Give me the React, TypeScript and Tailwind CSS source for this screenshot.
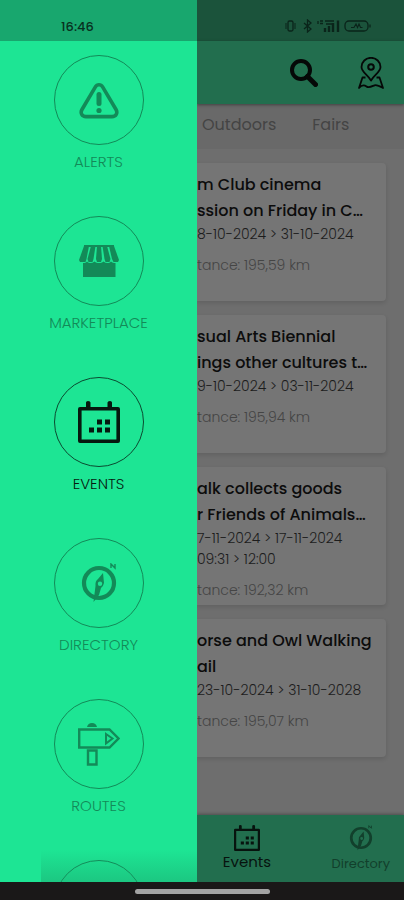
import * as React from "react";
import { clsx } from "clsx";

type IconProps = Readonly<{ className?: string }>;

function AlertIcon({ className }: IconProps) {
  return (
    <svg viewBox="0 0 40 40" fill="none" stroke="currentColor" strokeLinecap="round" strokeLinejoin="round" className={className}>
      <path d="M16.4 6.8 C18 4.1 22 4.1 23.6 6.8 L37 29.5 C39 33 37 36.6 33 36.6 H7 C3 36.6 1 33 3 29.5 Z" strokeWidth="3.6" />
      <path d="M20 14.5 V23.5" strokeWidth="5" />
      <circle cx="20" cy="30.500" r="2.6" fill="currentColor" stroke="none" />
    </svg>
  );
}

function MarketIcon({ className }: IconProps) {
  return (
    <svg viewBox="0 0 40 32" fill="currentColor" className={className}>
      <path d="M5 0 H35 V2 H5 Z" />
      <path d="M5 1 H10 L7.5 14 L6.5 17 H1 L0 15 Z" />
      <path d="M12 1 H16.5 L14.5 14 L13.5 17 H9.5 L8.5 14 Z" />
      <path d="M18 1 H22 L23 14 L22 17 H18 L17 14 Z" />
      <path d="M23.5 1 H28 L31.5 14 L30.5 17 H26.5 L25.5 14 Z" />
      <path d="M30 1 H35 L40 15 L39 17 H34.5 L33 14 Z" />
      <path d="M4 18 C6 18 7 17.5 8 16.5 C10 18.5 13 18.5 15.5 16.5 C18 18.5 22 18.5 24.5 16.5 C27 18.5 30 18.5 32 16.5 C33 17.5 35 18 36.5 18 V32 H4 Z" />
    </svg>
  );
}

function CalendarIcon({ className }: IconProps) {
  return (
    <svg viewBox="0 0 42 42" fill="currentColor" className={className}>
      <path fillRule="evenodd" d="M2 6 H8 V1.5 Q8 0 10 0 Q12.5 0 12.5 1.5 V6 H29.5 V1.5 Q29.5 0 32 0 Q34 0 34 1.5 V6 H40 Q42 6 42 8 V40 Q42 42 40 42 H2 Q0 42 0 40 V8 Q0 6 2 6 Z M3.6 9.6 V38.4 H38.4 V9.6 Z" />
      <path d="M19 18.500 h5 v5 h-5z M27 18.500 h5 v5 h-5z M11 26.500 h5 v5 h-5z M19 26.500 h5 v5 h-5z M27 26.500 h5 v5 h-5z" />
    </svg>
  );
}

function CompassIcon({ className }: IconProps) {
  return (
    <svg viewBox="0 0 36 40" fill="none" stroke="currentColor" className={className}>
      <circle cx="18" cy="20" r="15" strokeWidth="4.2" />
      <path fill="currentColor" stroke="none" fillRule="evenodd" d="M22 10 L23 20 Q22 24 20 25 L18 32 L12.5 39 L13.5 31 L14.5 23 Q14 18 17 16 Z M19 18.5 A2.2 2.2 0 1 0 19 22.9 A2.2 2.2 0 1 0 19 18.5 Z" />
      <path d="M30 5 V1 L34 5 V1" strokeWidth="1.4" />
    </svg>
  );
}

function SignpostIcon({ className }: IconProps) {
  return (
    <svg viewBox="0 0 42 44" fill="none" stroke="currentColor" strokeWidth="2.4" className={className}>
      <path d="M1.2 7.5 H31.5 L40.500 16.5 L31.5 25.5 H1.2 Z" />
      <path d="M28 12 L34.5 16.5 L28 21.5 Z" strokeWidth="2" />
      <path d="M9 5 Q10 1 14 1 Q18 1 19 5 Z" fill="currentColor" stroke="none" />
      <path d="M10 28.5 H18.5 V42.5 H10 Z" />
    </svg>
  );
}

function SearchIcon({ className }: IconProps) {
  return (
    <svg viewBox="0 0 28 28" fill="none" stroke="currentColor" className={className}>
      <circle cx="11" cy="11" r="9" strokeWidth="4" />
      <path d="M17.5 17.5 L25.500 25.500" strokeWidth="5" strokeLinecap="round" />
    </svg>
  );
}

function MapPinIcon({ className }: IconProps) {
  return (
    <svg viewBox="0 0 26 32" fill="none" stroke="currentColor" strokeWidth="1.8" strokeLinejoin="round" className={className}>
      <path d="M13 23.5 C10 18 3.5 15 3.5 10 A9.5 9.2 0 0 1 22.5 10 C22.5 15 16 18 13 23.5 Z" />
      <circle cx="13" cy="10" r="2.8" strokeWidth="2" />
      <path d="M7.5 20.5 H4.5 L1 31 C4 27.5 6.5 28 8.5 29.5 C11 31.5 14.5 29 16.5 28.3 C19 27.5 21.5 29 25 31 L21.5 20.5 H18.5" />
    </svg>
  );
}

function StatusIcons({ className }: IconProps) {
  return (
    <svg viewBox="0 0 88 14" fill="none" stroke="currentColor" strokeWidth="1.3" className={className}>
      <rect x="4" y="2" width="5" height="10" rx="1.5" />
      <path d="M2 4 V10 M11 4 V10" strokeWidth="1" />
      <path d="M20 4 L27 10 L23.500 13 V1 L27 4 L20 10" />
      <path d="M34 2 V5 M36 2 H39 M36 4.500 H39 M41 2 H50 M42 5 H49" />
      <path d="M41 13 V9 M45 13 V7 M49 13 V4 M54 13 V1.500" strokeWidth="2.400" />
      <rect x="61" y="2" width="23" height="10" rx="4" />
      <path d="M67 8.500 H70 L72 5 L73.500 8.500 L75 5 L76.500 8.500 H78.500" strokeWidth="1.100" />
      <path d="M86 5.500 V8.500" />
    </svg>
  );
}

const MENU = [
  { label: "ALERTS", Icon: AlertIcon, size: "w-10 h-10" },
  { label: "MARKETPLACE", Icon: MarketIcon, size: "w-10 h-8" },
  { label: "EVENTS", Icon: CalendarIcon, size: "w-[42px] h-[42px]", active: true },
  { label: "DIRECTORY", Icon: CompassIcon, size: "w-9 h-10" },
  { label: "ROUTES", Icon: SignpostIcon, size: "w-[42px] h-11" },
];

const EVENTS = [
  { title: ["m Club cinema", "ssion on Friday in C…"], when: ["8-10-2024 > 31-10-2024"], distance: "195,59 km" },
  { title: ["sual Arts Biennial", "ings other cultures t…"], when: ["9-10-2024 > 03-11-2024"], distance: "195,94 km" },
  { title: ["alk collects goods", "r Friends of Animals…"], when: ["7-11-2024 > 17-11-2024", "09:31 > 12:00"], distance: "192,32 km" },
  { title: ["orse and Owl Walking", "ail"], when: ["23-10-2024 > 31-10-2028"], distance: "195,07 km" },
];

function Drawer() {
  return (
    <aside className="flex w-[197px] shrink-0 flex-col overflow-hidden bg-[#1de594]">
      <div className="flex h-[41px] shrink-0 items-end bg-[#18a76e] pb-1 pl-[61px] text-[13px] font-medium leading-5 text-[#08301f]">
        16:46
      </div>
      <nav className="relative flex min-h-0 flex-1 flex-col items-center gap-11 overflow-hidden pt-[14px]">
        {MENU.map(({ label, Icon, size, active }) => (
          <a
            key={label}
            href="#"
            className={clsx("flex shrink-0 flex-col items-center gap-[7px]", active ? "text-[#06180f]" : "text-[#138a58]")}
          >
            <span
              className={clsx(
                "flex h-[90px] w-[90px] items-center justify-center rounded-full border",
                active ? "border-[#0b4a30]" : "border-[#138a58]",
              )}
            >
              <Icon className={size} />
            </span>
            <span className="text-[15px] font-light leading-5">{label}</span>
          </a>
        ))}
        <span className="h-[90px] w-[90px] shrink-0 rounded-full border border-[#138a58]" />
        <div className="absolute bottom-0 left-[41px] right-0 h-8 bg-linear-to-b from-transparent to-[#1a9a65]/40" />
      </nav>
    </aside>
  );
}

function EventCard({ title, when, distance }: (typeof EVENTS)[number]) {
  return (
    <article className="min-h-[138px] rounded-r-sm bg-[#757575] pt-[9px] shadow-[0_2px_4px_rgba(0,0,0,0.12)]">
      <h2 className="whitespace-nowrap text-base font-medium leading-[26px] text-[#0c0c0c]">
        {title.map((line) => (
          <span key={line} className="block">{line}</span>
        ))}
      </h2>
      {when.map((line) => (
        <p key={line} className="whitespace-nowrap text-sm font-light leading-[21px] text-[#1c1c1c]">{line}</p>
      ))}
      <p className="mt-[10px] whitespace-nowrap text-sm font-light leading-5 text-[#454545]">tance: {distance}</p>
    </article>
  );
}

export default function App() {
  return (
    <div className="flex h-screen flex-col overflow-hidden bg-[#1a1818] font-['Poppins','Inter',sans-serif]">
      <div className="flex min-h-0 flex-1">
        <Drawer />
        <div className="flex min-w-0 flex-1 flex-col overflow-hidden bg-[#6e6e6e]">
          <div className="flex h-[41px] shrink-0 items-end justify-end bg-[#1b533b] pb-2 pr-8 text-[#0a241a]">
            <StatusIcons className="h-[14px] w-[88px]" />
          </div>
          <header className="z-10 flex h-[63px] shrink-0 items-center justify-end gap-10 bg-[#226e4e] pr-5 text-[#050807] shadow-[0_1px_3px_rgba(0,0,0,0.4)]">
            <button type="button" aria-label="Search">
              <SearchIcon className="h-7 w-7" />
            </button>
            <button type="button" aria-label="Map">
              <MapPinIcon className="h-8 w-[26px]" />
            </button>
          </header>
          <div className="flex h-[45px] shrink-0 items-center gap-9 bg-[#696969] pb-1 pl-[5px] text-base text-[#444444]">
            <a href="#">Outdoors</a>
            <a href="#">Fairs</a>
          </div>
          <main className="flex min-h-0 flex-1 flex-col gap-[14px] overflow-hidden pr-[18px] pt-[14px]">
            {EVENTS.map((event) => (
              <EventCard key={event.distance} {...event} />
            ))}
          </main>
          <nav className="flex h-[67px] shrink-0 items-start justify-between bg-[#226e4e] pr-[14px] pt-[10px] shadow-[0_-1px_3px_rgba(0,0,0,0.3)]">
            <a href="#" className="flex w-[100px] flex-col items-center text-[15px] leading-[22px] text-[#07130e]">
              <CalendarIcon className="h-[26px] w-[26px]" />
              Events
            </a>
            <a href="#" className="flex flex-col items-center text-[13px] leading-[26px] text-[#12402c]">
              <CompassIcon className="h-[26px] w-6" />
              Directory
            </a>
          </nav>
        </div>
      </div>
      <footer className="flex h-[18px] shrink-0 items-center justify-center">
        <span className="h-[5px] w-[135px] rounded-full bg-[#a3a3a3]" />
      </footer>
    </div>
  );
}
